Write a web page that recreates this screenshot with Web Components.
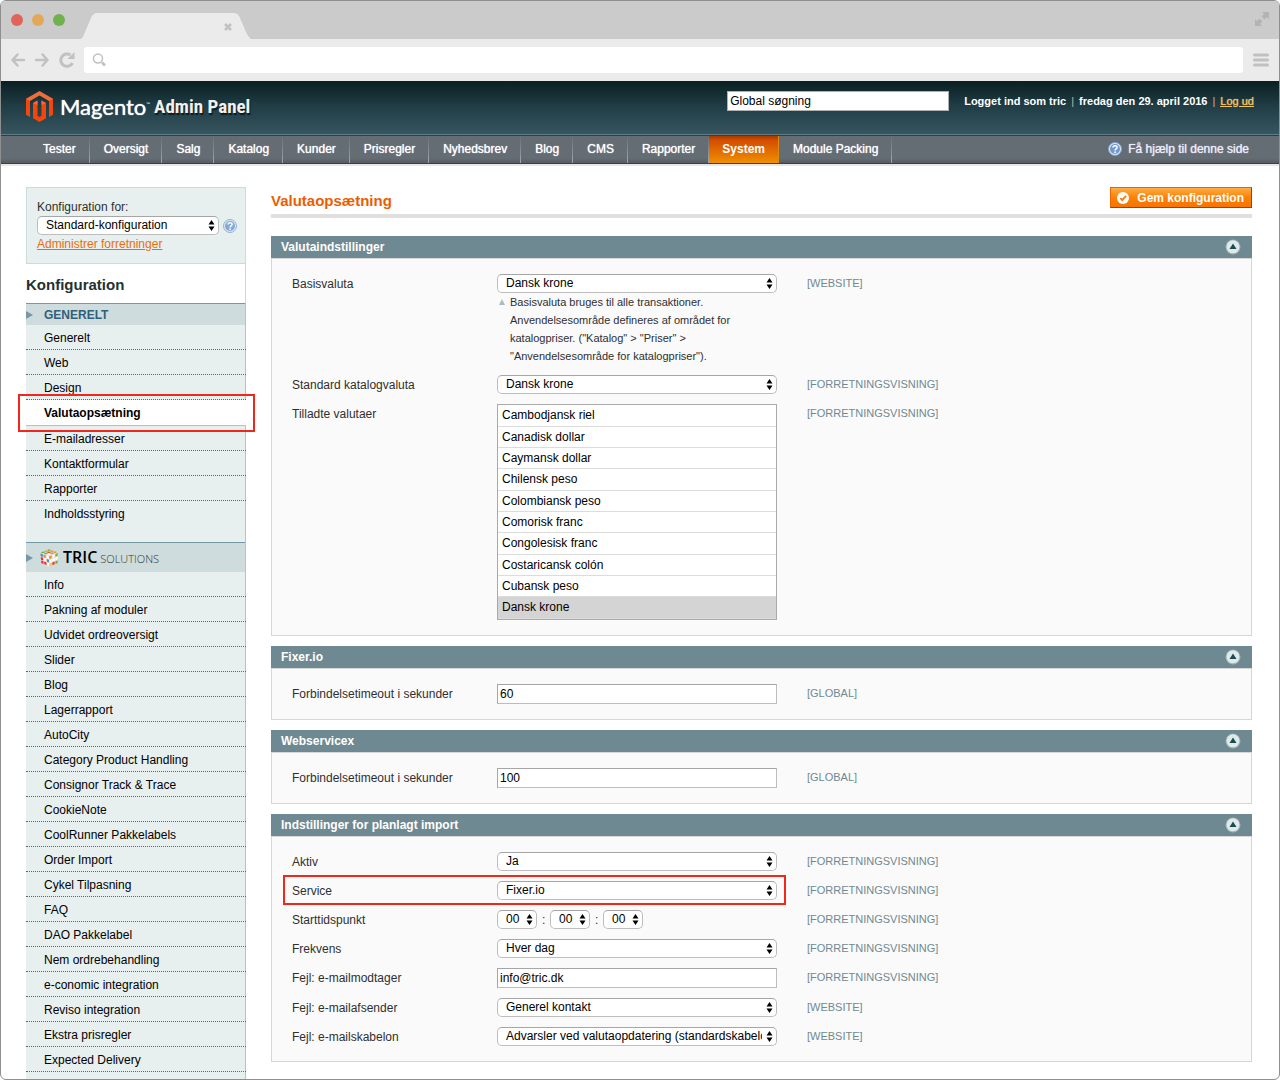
<!DOCTYPE html>
<html lang="da">
<head>
<meta charset="utf-8">
<title>Valutaopsætning</title>
<style>
  body { margin: 0; background: #fff; font: 12px/16px "Liberation Sans", Arial, sans-serif; color: #2f2f2f; }
</style>
</head>
<body>
<browser-window>
  <admin-header></admin-header>
  <admin-nav></admin-nav>
  <config-page>
    <config-sidebar slot="side">
      <side-group heading="GENERELT" active="Valutaopsætning"
        items="Generelt|Web|Design|Valutaopsætning|E-mailadresser|Kontaktformular|Rapporter|Indholdsstyring"></side-group>
      <side-group logo items="Info|Pakning af moduler|Udvidet ordreoversigt|Slider|Blog|Lagerrapport|AutoCity|Category Product Handling|Consignor Track &amp; Trace|CookieNote|CoolRunner Pakkelabels|Order Import|Cykel Tilpasning|FAQ|DAO Pakkelabel|Nem ordrebehandling|e-conomic integration|Reviso integration|Ekstra prisregler|Expected Delivery"></side-group>
    </config-sidebar>
    <config-section heading="Valutaindstillinger">
      <config-row type="select" label="Basisvaluta" value="Dansk krone" scope="[WEBSITE]">
        Basisvaluta bruges til alle transaktioner.<br>Anvendelsesområde defineres af området for<br>katalogpriser. ("Katalog" &gt; "Priser" &gt;<br>"Anvendelsesområde for katalogpriser").
      </config-row>
      <config-row type="select" label="Standard katalogvaluta" value="Dansk krone" scope="[FORRETNINGSVISNING]"></config-row>
      <config-row type="list" label="Tilladte valutaer" scope="[FORRETNINGSVISNING]"
        value="Cambodjansk riel|Canadisk dollar|Caymansk dollar|Chilensk peso|Colombiansk peso|Comorisk franc|Congolesisk franc|Costaricansk colón|Cubansk peso|Dansk krone"></config-row>
    </config-section>
    <config-section heading="Fixer.io">
      <config-row type="text" label="Forbindelsetimeout i sekunder" value="60" scope="[GLOBAL]"></config-row>
    </config-section>
    <config-section heading="Webservicex">
      <config-row type="text" label="Forbindelsetimeout i sekunder" value="100" scope="[GLOBAL]"></config-row>
    </config-section>
    <config-section heading="Indstillinger for planlagt import">
      <config-row type="select" label="Aktiv" value="Ja" scope="[FORRETNINGSVISNING]"></config-row>
      <config-row type="select" label="Service" value="Fixer.io" scope="[FORRETNINGSVISNING]" marked></config-row>
      <config-row type="time" label="Starttidspunkt" value="00|00|00" scope="[FORRETNINGSVISNING]"></config-row>
      <config-row type="select" label="Frekvens" value="Hver dag" scope="[FORRETNINGSVISNING]"></config-row>
      <config-row type="text" label="Fejl: e-mailmodtager" value="info@tric.dk" scope="[FORRETNINGSVISNING]"></config-row>
      <config-row type="select" label="Fejl: e-mailafsender" value="Generel kontakt" scope="[WEBSITE]"></config-row>
      <config-row type="select" label="Fejl: e-mailskabelon" value="Advarsler ved valutaopdatering (standardskabelon)" scope="[WEBSITE]"></config-row>
    </config-section>
  </config-page>
</browser-window>

<script>
const BASE = `*,*::before,*::after{box-sizing:border-box} svg{display:block;flex:none}`;

class Base extends HTMLElement {
  connectedCallback() {
    if (this.shadowRoot) return;
    this.attachShadow({ mode: 'open' }).innerHTML = `<style>${BASE}${this.css()}</style>${this.html()}`;
  }
  a(name) { return (this.getAttribute(name) || '').replace(/&/g, '&amp;').replace(/"/g, '&quot;'); }
  list(name) { return this.a(name).split('|'); }
}

const HELP = (n) => `<svg width="${n}" height="${n}" viewBox="0 0 14 14" aria-hidden="true">
  <circle cx="7" cy="7" r="6.5" fill="#dbe7f5" stroke="#7fa2cc"/><circle cx="7" cy="7" r="5" fill="#6f98cd"/>
  <path d="M5 5.6c0-2.6 4.1-2.5 4.1-.2C9.100 6.900 7.100 6.800 7.100 8.400" fill="none" stroke="#fff" stroke-width="1.500"/><circle cx="7.100" cy="10.200" r=".9" fill="#fff"/></svg>`;

customElements.define('browser-window', class extends Base {
  css() { return `
    :host{display:flex;flex-direction:column;min-height:100vh;box-sizing:border-box;border:1px solid #8f8f8f;border-radius:6px;overflow:hidden;background:#fff}
    .tabs{height:38px;background:#cbcbcb;display:flex;align-items:flex-start;justify-content:space-between;padding-right:9px}
    .left{display:flex}
    .lights{margin:13px 15px 0 10px}
    .expand{margin-top:10px}
    .bar{height:42px;background:#ebebeb;display:flex;align-items:center;padding:0 10px 0 9px}
    .nav{margin-right:8px}
    .url{flex:1;height:26px;background:#fff;border-radius:3px;display:flex;align-items:center;padding-left:8px;margin-right:10px}
    input{flex:1;border:0;background:none;outline:0;margin-left:6px}`; }
  html() { return `
    <div class="tabs"><div class="left">
      <svg class="lights" width="55" height="12" viewBox="0 0 55 12"><circle cx="6" cy="6" r="6" fill="#e0645b"/><circle cx="27" cy="6" r="6" fill="#e3a857"/><circle cx="48" cy="6" r="6" fill="#6fb14c"/></svg>
      <svg width="170" height="38" viewBox="0 0 170 38"><path d="M0 38C2 36 3 34 4 31L10 17Q12 12 16 12H153Q157 12 159 17L165 31Q167 36 170 38Z" fill="#ebebeb"/><path d="M144 23l6 6m0-6l-6 6" stroke="#c1c1c1" stroke-width="2.500"/></svg></div>
      <svg class="expand" width="16" height="16" viewBox="0 0 16 16" fill="#b3b3b3" stroke="#b3b3b3"><path d="M8 1H15V8Z M1 8V15H8Z" stroke="none"/><path d="M12.500 3.500L9 7M3.500 12.500L7 9" stroke-width="4"/></svg>
    </div>
    <div class="bar">
      <svg class="nav" width="66" height="20" viewBox="0 0 66 20" fill="none" stroke="#c1c1c1" stroke-width="2.500" stroke-linecap="round" stroke-linejoin="round"><path d="M7.500 4.500L2.500 10l5 5.500M2.500 10H14M32.500 4.500L37.500 10l-5 5.500M37.500 10H26"/><path d="M60.500 5A6.200 6.200 0 1 0 62.500 13" stroke-linecap="butt" stroke-width="3"/><path d="M57.500 9h7V2z" fill="#c1c1c1" stroke="none"/></svg>
      <div class="url"><svg width="16" height="16" viewBox="0 0 16 16" fill="none" stroke="#c1c1c1"><circle cx="6" cy="6.500" r="4.500" stroke-width="1.500"/><path d="M10 10.500L13 13.500" stroke-width="2.500"/></svg><input aria-label="Adresse"></div>
      <svg width="16" height="14" viewBox="0 0 16 14" stroke="#c1c1c1" stroke-width="3" stroke-linecap="round"><path d="M1.500 2h13M1.500 7h13M1.500 12h13"/></svg>
    </div>
    <slot></slot>`; }
});

customElements.define('admin-header', class extends Base {
  css() { return `
    :host{display:block;color:#fff}
    header{display:flex;justify-content:space-between;align-items:flex-start;height:55px;padding:10px 25px 0;background:linear-gradient(#0a1f22,#223f48 50%,#38565f);border-bottom:1px solid #2b414a;box-shadow:inset 0 -1px #607b84}
    .logo{display:flex;align-items:center;height:31px}
    .m{font:22px/31px Lato,"Open Sans",sans-serif;margin-left:7px;text-shadow:0 0 1px #fff}
    .tm{font:5px/8px Lato,sans-serif;align-self:flex-start;margin-top:9px}
    .ap{font:bold 19px/31px "Liberation Sans Narrow","Arial Narrow","Roboto Condensed",sans-serif;color:#f0f0ee;margin-left:4px;text-shadow:1px 2px 1px #0a1a1e}
    .right{display:flex;align-items:center}
    input{width:222px;height:20px;border:1px solid #b0b0b0;padding:0 2px;margin-right:15px;font:12px "Liberation Sans",Arial,sans-serif;color:#000;background:#fff;border-radius:0}
    .who{display:flex;gap:5px;font-weight:bold;font-size:11px}
    i{font-style:normal;font-weight:normal;color:#c0b9a8}
    a{color:#f4c262;font-weight:normal;text-shadow:0 0 1px #f4c262}`; }
  html() { return `<header>
    <div class="logo">
      <svg width="27" height="31" viewBox="0 0 27 31"><path d="M13.500 0L0 7.800V23.500L4 25.800V10L13.500 4.600L23 10V25.800L27 23.500V7.800Z" fill="#f26b3a"/><path d="M0 7.800L4 10V25.800L0 23.500Z M27 7.800L23 10V25.800L27 23.500Z" fill="#f4460a"/><path d="M7 12L11.500 9.500V24.800L13.500 26L15.500 24.800V9.500L20 12V27.300L13.500 31L7 27.300Z" fill="#f4460a"/><path d="M7 12L11.500 9.500V14Z M20 12L15.500 9.500V14Z" fill="#f26b3a"/></svg>
      <span class="m">Magento</span><span class="tm">™</span><span class="ap">Admin Panel</span>
    </div>
    <div class="right"><input aria-label="Global søgning" value="Global søgning">
      <div class="who"><span>Logget ind som tric</span><i>|</i><span>fredag den 29. april 2016</span><i>|</i><a href="#">Log ud</a></div></div>
    </header>`; }
});

customElements.define('admin-nav', class extends Base {
  css() { return `
    :host{display:block}
    nav{display:flex;justify-content:space-between;height:28px;padding:0 30px 0 28px;background:linear-gradient(#656d74,#656d74 82%,#555b61);border-bottom:1px solid #2d444f;box-shadow:0 2px #e6e6e6}
    ul{display:flex;list-style:none;margin:0;padding:0}
    li{border-right:1px solid;border-image:linear-gradient(#656d74,#a5a9ac) 1}
    a{display:block;color:#fff;text-decoration:none;line-height:26px;padding:0 13px 0 14px;text-shadow:0 0 1px #fff}
    li.on{background:linear-gradient(#a83a00,#d54c00 15%,#ee9000);border-image:none;border-color:#e08a10}
    li.on a{font-weight:bold;text-shadow:none;padding:0 13px}
    a.help{display:flex;align-items:center;gap:6px;padding:0;color:#ececfb;text-shadow:0 0 1px #ececfb;height:26px}`; }
  html() {
    const items = 'Tester|Oversigt|Salg|Katalog|Kunder|Prisregler|Nyhedsbrev|Blog|CMS|Rapporter|System|Module Packing'.split('|');
    return `<nav><ul>${items.map(t => `<li${t === 'System' ? ' class="on"' : ''}><a href="#">${t}</a></li>`).join('')}</ul>
      <a class="help" href="#">${HELP(14)}Få hjælp til denne side</a></nav>`;
  }
});

customElements.define('config-page', class extends Base {
  css() { return `
    :host{display:flex;flex:1;gap:25px;padding:23px 27px 0 25px}
    main{flex:1;display:flex;flex-direction:column;gap:10px;padding-bottom:17px;min-width:0}
    .head{display:flex;justify-content:space-between;align-items:flex-start;height:31px;border-bottom:4px solid #dfdfdf;margin-bottom:8px}
    h1{margin:0;font-size:15px;line-height:28px;color:#eb5e00}
    button{display:flex;align-items:center;gap:8px;height:21px;border:1px solid;border-color:#ed6502 #a04300 #a04300 #ed6502;background:linear-gradient(#ffac47,#fb8204 50%,#f77400);color:#fff;font:bold 12px/18px "Liberation Sans",Arial,sans-serif;padding:0 7px 0 6px}`; }
  html() { return `<slot name="side"></slot><main><div class="head"><h1>Valutaopsætning</h1>
    <button type="button"><svg width="12" height="12" viewBox="0 0 12 12"><circle cx="6" cy="6" r="6" fill="#fff"/><path d="M3.200 6l2 2.200L9 3.800" fill="none" stroke="#f27b12" stroke-width="1.800"/></svg>Gem konfiguration</button></div><slot></slot></main>`; }
});

const SELECT_CSS = `
  .sel{display:inline-grid;align-items:center;height:19px;width:100%}
  .sel>*{grid-area:1/1}
  .sel svg{justify-self:end;margin-right:4px;pointer-events:none}
  .sel select{appearance:none;width:100%;height:19px;border:1px solid #b3b3b3;border-color:#a6a6a6 #bdbdbd #bdbdbd;border-radius:5px;background:#fff;color:#000;margin:0;padding:0 14px 2px 8px;font:12px/16px "Liberation Sans",Arial,sans-serif}`;
const sel = (id, value, label) => `<span class="sel"><select id="${id}"${label ? ` aria-label="${label}"` : ''}><option>${value}</option></select>
  <svg width="7" height="11" viewBox="0 0 7 11"><path d="M3.500 0L6.500 4.500H.5ZM3.500 11L6.500 6.500H.5Z"/></svg></span>`;

customElements.define('config-sidebar', class extends Base {
  css() { return `
    :host{display:flex;flex-direction:column;width:220px;flex:none}
    .store{height:77px;padding:11px 8px 0 10px;border:1px solid #cbdada;background:#e7efef}
    label{display:block;line-height:17px}
    .pick{display:flex;align-items:center;gap:4px}
    .pick .sel{width:182px}
    .store a{color:#ec6d0d;line-height:19px}
    .q{opacity:.8}
    h2{margin:0;padding:11px 0 8px;font-size:15px;line-height:20px;color:#253033;border-right:1px solid #d5d5d5}
    .groups{flex:1;background:#e7efef;border-right:1px solid #b4c4c2}${SELECT_CSS}`; }
  html() { return `<div class="store"><label for="scope">Konfiguration for:</label>
    <div class="pick">${sel('scope', 'Standard-konfiguration')}<span class="q">${HELP(14)}</span></div>
    <a href="#">Administrer forretninger</a></div><h2>Konfiguration</h2><div class="groups"><slot></slot></div>`; }
});

/* Puzzle cube: each face is a 3x3 grid between an origin and two edge vectors. */
const face = (ox, oy, ux, uy, vx, vy, colours) => [...colours].map((c, n) => {
  const i = n % 3, j = Math.floor(n / 3), g = 0.12;
  const p = (s, t) => `${(ox + ux * s + vx * t).toFixed(2)} ${(oy + uy * s + vy * t).toFixed(2)}`;
  const s0 = (i + g) / 3, s1 = (i + 1 - g) / 3, t0 = (j + g) / 3, t1 = (j + 1 - g) / 3;
  return `<path d="M${p(s0, t0)}L${p(s1, t0)}L${p(s1, t1)}L${p(s0, t1)}Z" fill="${{ r: '#e8352b', b: '#3a8fd6', w: '#ffffff', g: '#6fb52f', o: '#f08a2a', y: '#f6c63a' }[c]}"/>`;
}).join('');
const CUBE = `<svg width="18" height="18" viewBox="0 0 18 18" aria-hidden="true"><path d="M10 0L18 2.500L17 14L9 18L1 14.500L0 4Z" fill="#e4ded6"/>
  ${face(0, 3.5, 9, -3.5, 9, 3, 'goggrowgo')}${face(0, 4, 9, 3, 1, 10.500, 'bowrwbrrw')}${face(9, 7, 9, -3.500, 0, 11, 'owgwwwyrg')}</svg>`;

customElements.define('side-group', class extends Base {
  css() { return `
    :host{display:block;padding-bottom:16px}
    :host([logo]){padding-bottom:0}
    h3{margin:0;height:22px;display:flex;align-items:center;gap:11px;border-top:1px solid #7797a3;background:#cfdcde;color:#2f6079;font-size:12px}
    h3.logo{height:30px;gap:7px}
    .brand{display:flex;align-items:baseline;gap:3px;font:300 11px/20px "Open Sans",sans-serif;color:#333;margin-left:-2px}
    .brand b{font-size:16px;font-weight:600;color:#000}
    ul{list-style:none;margin:0 -1px 0 0;padding:0}
    li{border-bottom:1px dotted #5d6a6a;padding:5px 0 3px 18px}
    :host(:not([logo])) li:last-child{border-bottom-color:transparent}
    a{color:#000;text-decoration:none;display:block}
    li.on{background:#fff;border-bottom:1px solid #b4bfbf;padding-bottom:4px}
    li.on a{font-weight:bold;position:relative}
    li.on a::after{content:"";position:absolute;inset:-11px -9px -11px -26px;border:2px solid #f2271b}`; }
  html() {
    const arrow = '<svg width="7" height="8" viewBox="0 0 7 8"><path d="M0 0L7 4L0 8Z" fill="#7797a3"/></svg>';
    const head = this.hasAttribute('logo')
      ? `<h3 class="logo">${arrow}${CUBE}<span class="brand"><b>TRIC</b><span>SOLUTIONS</span></span></h3>`
      : `<h3>${arrow}${this.a('heading')}</h3>`;
    return `${head}<ul>${this.list('items').map(t => `<li${t === this.a('active') ? ' class="on"' : ''}><a href="#">${t}</a></li>`).join('')}</ul>`;
  }
});

customElements.define('config-section', class extends Base {
  css() { return `
    :host{display:block}
    .bar{display:flex;align-items:center;justify-content:space-between;height:22px;padding:0 11px 0 10px;background:#6f8992;color:#fff}
    h2{margin:0;font-size:12px;line-height:22px}
    button{border:0;background:none;padding:0}
    .body{border:1px solid #d6d6d6;background:#fafafa;padding:10px 20px}`; }
  html() { return `<section><div class="bar"><h2>${this.a('heading')}</h2><button type="button" aria-label="Fold sammen">
    <svg width="16" height="16" viewBox="0 0 16 16"><circle cx="8" cy="8" r="7.500" fill="#9db1b7"/><circle cx="8" cy="7.800" r="6.500" fill="#dfeaeb"/><path d="M8 4.500L11.500 10H4.500Z" fill="#1f4a54"/></svg></button></div>
    <div class="body"><slot></slot></div></section>`; }
});

customElements.define('config-row', class extends Base {
  css() { return `
    :host{display:block;position:relative}
    .row{display:grid;grid-template-columns:205px 280px 1fr;padding:5px 0;align-items:start}
    .label{line-height:19px;padding-top:1px;height:19px}
    .scope{padding-left:30px;font-size:11px;line-height:19px;color:#6f8992}
    .ctl{display:flex;flex-direction:column}
    .hint{display:flex;gap:5px;margin:0;font-size:11px;line-height:18px}
    .hint svg{margin:6px 0 0 2px}
    input{width:100%;height:20px;border:1px solid #a9a9a9;border-color:#a6a6a6 #bdbdbd #bdbdbd #a6a6a6;border-radius:0;background:#fff;color:#000;margin:0;padding:0 2px;font:12px/16px "Liberation Sans",Arial,sans-serif}
    .time{display:flex;align-items:center;gap:5px}
    .time .sel{width:40px}
    .time i{font-style:normal;width:3px}
    select[multiple]{width:100%;height:216px;border:1px solid #a9a9a9;border-radius:0;margin:0;padding:0;background:#fff;color:#000;font:12px/16px "Liberation Sans",Arial,sans-serif;overflow:hidden;outline:0}
    select[multiple] option{height:21px;min-height:0;padding:3px 4px 1px;line-height:16px;border-bottom:1px solid #dcdcdc;border-radius:0}
    select[multiple] option:nth-child(3n+1){height:22px}
    select[multiple] option:checked{background:linear-gradient(#d4d4d4,#d4d4d4);color:#000}
    :host([marked])::after{content:"";position:absolute;inset:-1px auto 0 -9px;width:503px;border:2px solid #f2271b;pointer-events:none;box-sizing:border-box}
    ${SELECT_CSS}`; }
  html() {
    const v = this.list('value'), type = this.a('type');
    let c;
    if (type === 'select') c = sel('f', v[0]);
    else if (type === 'text') c = `<input id="f" type="text" value="${v[0]}">`;
    else if (type === 'time') c = `<span class="time">${sel('f', v[0])}<i>:</i>${sel('m', v[1], 'Minutter')}<i>:</i>${sel('s', v[2], 'Sekunder')}</span>`;
    else c = `<select id="f" multiple size="10">${v.map((t, n) => `<option${n === v.length - 1 ? ' selected' : ''}>${t}</option>`).join('')}</select>`;
    const hint = this.textContent.trim() ? '<p class="hint"><svg width="6" height="6" viewBox="0 0 6 6"><path d="M3 0L6 6H0Z" fill="#a9bcc1"/></svg><span><slot></slot></span></p>' : '';
    return `<div class="row"><label class="label" for="f">${this.a('label')}</label><div class="ctl">${c}${hint}</div><span class="scope">${this.a('scope')}</span></div>`;
  }
});
</script>
</body>
</html>
